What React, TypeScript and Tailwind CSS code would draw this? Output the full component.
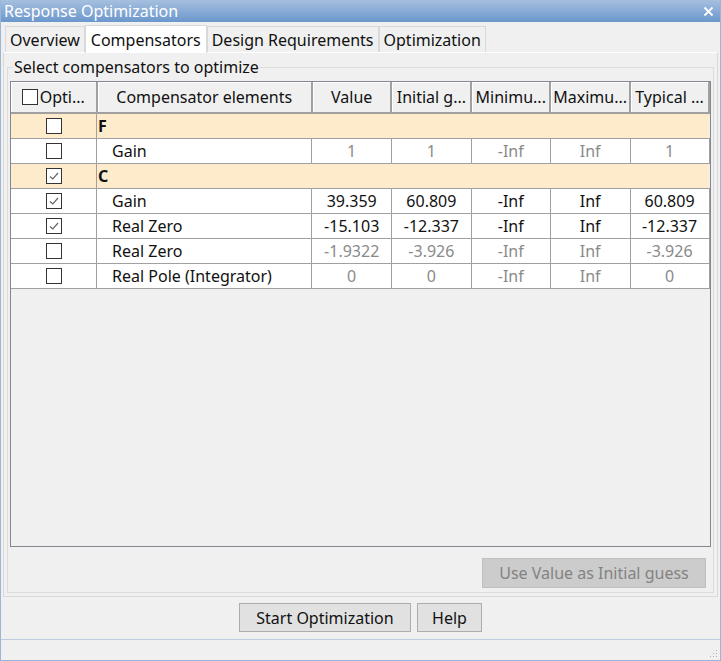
import React from 'react';

type Row = {
  kind: 'group' | 'item';
  name: string;
  checked: boolean;
  values?: string[];
};

const rows: Row[] = [
  { kind: 'group', name: 'F', checked: false },
  { kind: 'item', name: 'Gain', checked: false, values: ['1', '1', '-Inf', 'Inf', '1'] },
  { kind: 'group', name: 'C', checked: true },
  { kind: 'item', name: 'Gain', checked: true, values: ['39.359', '60.809', '-Inf', 'Inf', '60.809'] },
  { kind: 'item', name: 'Real Zero', checked: true, values: ['-15.103', '-12.337', '-Inf', 'Inf', '-12.337'] },
  { kind: 'item', name: 'Real Zero', checked: false, values: ['-1.9322', '-3.926', '-Inf', 'Inf', '-3.926'] },
  { kind: 'item', name: 'Real Pole (Integrator)', checked: false, values: ['0', '0', '-Inf', 'Inf', '0'] },
];

const headers = ['Compensator elements', 'Value', 'Initial g...', 'Minimu...', 'Maximu...', 'Typical ...'];
const widths = ['w-[86px]', 'w-[216px]', 'w-[80px]', 'w-[80px]', 'w-[79px]', 'w-[80px]', 'w-[79px]'];

function Check({ checked }: { checked: boolean }) {
  return (
    <div className="w-[16px] h-[16px] border border-[#333] bg-white flex items-center justify-center">
      {checked && (
        <svg width="12" height="12" viewBox="0 0 12 12">
          <path d="M2 6.5 L4.8 9 L10 3" fill="none" stroke="#666" strokeWidth="1.2" />
        </svg>
      )}
    </div>
  );
}

function Tab({ label, active }: { label: string; active?: boolean }) {
  return (
    <div
      className={
        active
          ? 'h-[28px] px-[5px] bg-white border border-b-0 border-[#d9d9d9] flex items-center text-[16px] -mb-px relative z-10'
          : 'h-[26px] px-[4px] bg-[#f0f0f0] border border-b-0 border-[#d9d9d9] flex items-center text-[16px]'
      }
    >
      {label}
    </div>
  );
}

export default function App() {
  return (
    <div
      className="w-[721px] h-[661px] bg-[#f0f0f0] flex flex-col border-x border-b border-[#9cb5d6] text-[#111]"
      style={{ fontFamily: '"Noto Sans", "Open Sans", sans-serif' }}
    >
      <div className="h-[22px] bg-gradient-to-b from-[#a6bfdf] to-[#6b97cc] flex items-center justify-between pl-[3px] pr-[6px] text-white text-[16px]">
        <span className="leading-none">Response Optimization</span>
        <svg width="11" height="11" viewBox="0 0 11 11">
          <path d="M1.5 1.5 L9.5 9.5 M9.5 1.5 L1.5 9.5" stroke="white" strokeWidth="1.8" />
        </svg>
      </div>

      <div className="flex-1 flex flex-col px-[2px]">
        <div className="flex items-end pl-[2px] h-[30px]">
          <Tab label="Overview" />
          <Tab label="Compensators" active />
          <Tab label="Design Requirements" />
          <Tab label="Optimization" />
        </div>

        <div className="h-[545px] border border-[#d9d9d9] border-t-white bg-[#f0f0f0] px-[3px] pt-[7px] pb-[4px] flex flex-col">
          <div className="flex-1 border border-[#dcdcdc] relative mt-[7px] flex flex-col px-[2px] pt-[13px] pb-[4px]">
            <span className="absolute left-[5px] -top-[12px] px-[1px] bg-[#f0f0f0] text-[16px] leading-[22px]">
              Select compensators to optimize
            </span>

            <div className="h-[466px] border border-[#828790] bg-[#f0f0f0] overflow-hidden">
              <table className="border-collapse text-[16px] table-fixed">
                <thead>
                  <tr className="h-[31px] bg-[#f0f0f0]">
                    <th className={`${widths[0]} p-0 font-normal border-r-2 border-b-2 border-[#a0a0a0] shadow-[inset_1px_1px_0_white]`}>
                      <div className="flex items-center justify-center gap-[2px]">
                        <Check checked={false} />
                        <span>Opti...</span>
                      </div>
                    </th>
                    {headers.map((h, i) => (
                      <th
                        key={i}
                        className={`${widths[i + 1]} p-0 font-normal whitespace-nowrap border-r-2 border-b-2 border-[#a0a0a0] shadow-[inset_1px_1px_0_white]`}
                      >
                        {h}
                      </th>
                    ))}
                  </tr>
                </thead>
                <tbody>
                  {rows.map((r, i) =>
                    r.kind === 'group' ? (
                      <tr key={i} className="h-[25px] bg-[#fdebcb]">
                        <td className="p-0 border-r border-b border-[#a0a0a0]">
                          <div className="flex justify-center">
                            <Check checked={r.checked} />
                          </div>
                        </td>
                        <td colSpan={6} className="p-0 pl-[1px] font-bold border-b border-[#a0a0a0]">
                          {r.name}
                        </td>
                      </tr>
                    ) : (
                      <tr key={i} className="h-[25px] bg-white">
                        <td className="p-0 border-r border-b border-[#a0a0a0]">
                          <div className="flex justify-center">
                            <Check checked={r.checked} />
                          </div>
                        </td>
                        <td className="p-0 pl-[15px] border-r border-b border-[#a0a0a0] whitespace-nowrap">
                          {r.name}
                        </td>
                        {r.values!.map((v, j) => (
                          <td
                            key={j}
                            className={`p-0 text-center border-r border-b border-[#a0a0a0] ${r.checked ? 'text-[#111]' : 'text-[#8a8a8a]'}`}
                          >
                            {v}
                          </td>
                        ))}
                      </tr>
                    )
                  )}
                </tbody>
              </table>
            </div>

            <div className="flex justify-end mt-[11px] pr-[5px]">
              <div className="w-[224px] h-[30px] bg-[#cccccc] border border-[#bfbfbf] text-[#838383] text-[16px] flex items-center justify-center">
                Use Value as Initial guess
              </div>
            </div>
          </div>
        </div>

        <div className="flex justify-center gap-[6px] pt-[6px]">
          <div className="w-[172px] h-[29px] bg-[#e1e1e1] border border-[#adadad] flex items-center justify-center text-[16px]">
            Start Optimization
          </div>
          <div className="w-[65px] h-[29px] bg-[#e1e1e1] border border-[#adadad] flex items-center justify-center text-[16px]">
            Help
          </div>
        </div>
      </div>

      <div className="h-[21px] border-t border-[#bccde0] flex justify-end items-end pr-[2px] pb-[2px]">
        <svg width="10" height="10" viewBox="0 0 10 10">
          <rect x="8" y="2" width="1" height="1" fill="#b0b0b0" />
          <rect x="5" y="5" width="1" height="1" fill="#b0b0b0" />
          <rect x="8" y="5" width="1" height="1" fill="#b0b0b0" />
          <rect x="2" y="8" width="1" height="1" fill="#b0b0b0" />
          <rect x="5" y="8" width="1" height="1" fill="#b0b0b0" />
          <rect x="8" y="8" width="1" height="1" fill="#b0b0b0" />
        </svg>
      </div>
    </div>
  );
}
